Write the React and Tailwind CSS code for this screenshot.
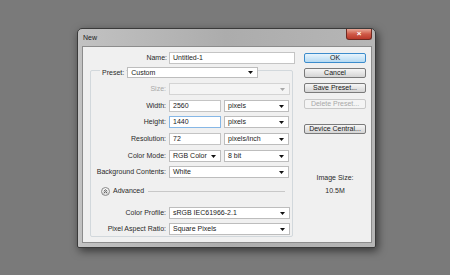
import React from "react";

const font = { fontFamily: '"Liberation Sans", Arial, sans-serif' };

function Arrow({ disabled }) {
  return (
    <svg width="5" height="3" viewBox="0 0 5 3" className="shrink-0">
      <path d="M0 0H5L2.5 3Z" fill={disabled ? "#a8a8a8" : "#111"} />
    </svg>
  );
}

function Combo({ w, value, disabled }) {
  return (
    <div
      className={`flex h-[12px] items-center justify-between border pl-[3px] pr-[4px] ${
        disabled ? "border-[#d4d4d4] bg-[#f4f4f4]" : "border-[#bdbdbd] bg-white"
      }`}
      style={{ width: w }}
    >
      <span className="leading-[10px] text-[#222]">{value}</span>
      <Arrow disabled={disabled} />
    </div>
  );
}

function Field({ w, value, focus }) {
  return (
    <div
      className={`flex h-[12px] items-center border pl-[3px] ${
        focus ? "border-[#86b7e6]" : "border-[#c4c4c4]"
      } bg-white`}
      style={{ width: w }}
    >
      <span className="leading-[10px] text-[#222]">{value}</span>
    </div>
  );
}

function Row({ label, children, className = "", disabled }) {
  return (
    <div className={`flex h-[12px] items-center gap-[3px] ${className}`}>
      <div
        className={`w-[75px] text-right leading-[10px] ${
          disabled ? "text-[#a8a8a8]" : "text-[#2a2a2a]"
        }`}
      >
        {label}
      </div>
      <div className="flex items-center gap-[3px]">{children}</div>
    </div>
  );
}

function Btn({ children, className = "", primary, disabled }) {
  return (
    <div
      className={`flex h-[10px] w-[62px] items-center justify-center rounded-[2px] border leading-[8px] ${
        primary
          ? "border-[#3c8ccc] bg-gradient-to-b from-[#e8f4fc] to-[#b6daf2] text-[#1a1a1a]"
          : disabled
          ? "border-[#c8c8c8] bg-[#f4f4f4] text-[#a8a8a8]"
          : "border-[#7a7a7a] bg-gradient-to-b from-[#f6f6f6] to-[#d4d4d4] text-[#1a1a1a]"
      } ${className}`}
    >
      {children}
    </div>
  );
}

export default function App() {
  return (
    <div
      className="h-[275px] w-[450px] overflow-hidden bg-[#7a7a7a] pl-[77px] pt-[28px] text-[7px]"
      style={font}
    >
      <div className="flex h-[220px] w-[299px] flex-col rounded-t-[5px] rounded-b-[2px] border border-[#3a3a3a] bg-gradient-to-r from-[#c2c2c2] via-[#acacac] to-[#b6b6b6] shadow-[2px_3px_8px_rgba(0,0,0,0.55)]">
        {/* title bar */}
        <div className="flex h-[17px] items-start justify-between pl-[5px] pr-[3px]">
          <span className="pt-[5px] leading-[8px] text-[#1c1c1c]">New</span>
          <div className="flex h-[11px] w-[26px] items-center justify-center rounded-b-[3px] border border-t-0 border-[#6e2a22] bg-gradient-to-b from-[#e6a898] via-[#cf5a48] to-[#b9382a]">
            <span className="text-[8px] font-bold leading-[8px] text-white">×</span>
          </div>
        </div>
        {/* client */}
        <div className="ml-[4px] flex h-[197px] w-[290px] border border-[#8c8c8c] bg-[#f0f0f0]">
          {/* left column */}
          <div className="flex w-[212px] flex-col">
            <div className="mt-[5px] flex h-[12px] items-center gap-[2px]">
              <div className="w-[84px] text-right leading-[10px] text-[#2a2a2a]">Name:</div>
              <Field w={126} value="Untitled-1" />
            </div>
            <div className="ml-[7px] mt-[6px] flex h-[167px] w-[203px] flex-col rounded-[2px] border border-[#d2d8dc]">
              <div className="-mt-[4px] flex h-[11px] items-center">
                <span className="ml-[9px] bg-[#f0f0f0] px-[2px] leading-[10px] text-[#2a2a2a]">Preset:</span>
                <div className="ml-[1px] bg-[#f0f0f0]">
                  <div className="flex h-[11px] w-[131px] items-center justify-between border border-[#bdbdbd] bg-white pl-[3px] pr-[4px]">
                    <span className="leading-[10px] text-[#222]">Custom</span>
                    <Arrow />
                  </div>
                </div>
              </div>
              <Row label="Size:" className="mt-[5px]" disabled>
                <Combo w={121} value="" disabled />
              </Row>
              <Row label="Width:" className="mt-[5px]">
                <Field w={52} value="2560" />
                <Combo w={65} value="pixels" />
              </Row>
              <Row label="Height:" className="mt-[4px]">
                <Field w={52} value="1440" focus />
                <Combo w={65} value="pixels" />
              </Row>
              <Row label="Resolution:" className="mt-[5px]">
                <Field w={52} value="72" />
                <Combo w={65} value="pixels/inch" />
              </Row>
              <Row label="Color Mode:" className="mt-[5px]">
                <Combo w={52} value="RGB Color" />
                <Combo w={65} value="8 bit" />
              </Row>
              <Row label="Background Contents:" className="mt-[4px]">
                <Combo w={120} value="White" />
              </Row>
              <div className="mt-[8px] flex h-[10px] items-center">
                <div className="ml-[10px] flex h-[9px] w-[9px] items-center justify-center rounded-full border border-[#8a8a8a] bg-gradient-to-b from-[#fbfbfb] to-[#dcdcdc]">
                  <svg width="5" height="5" viewBox="0 0 5 5">
                    <path d="M0.8 2.3L2.5 0.8L4.2 2.3M0.8 4.2L2.5 2.7L4.2 4.2" stroke="#333" strokeWidth="0.8" fill="none" />
                  </svg>
                </div>
                <span className="ml-[3px] leading-[10px] text-[#2a2a2a]">Advanced</span>
                <div className="ml-[4px] mr-[7px] h-px flex-1 bg-[#c8c8c8]" />
              </div>
              <Row label="Color Profile:" className="mt-[11px]">
                <Combo w={121} value="sRGB IEC61966-2.1" />
              </Row>
              <Row label="Pixel Aspect Ratio:" className="mt-[4px]">
                <Combo w={121} value="Square Pixels" />
              </Row>
            </div>
          </div>
          {/* right column */}
          <div className="ml-[9px] flex w-[62px] flex-col items-center">
            <Btn primary className="mt-[6px]">OK</Btn>
            <Btn className="mt-[5px]">Cancel</Btn>
            <Btn className="mt-[5px]">Save Preset...</Btn>
            <Btn disabled className="mt-[6px]">Delete Preset...</Btn>
            <Btn className="mt-[15px]">Device Central...</Btn>
            <div className="mt-[39px] h-[9px] leading-[9px] text-[#2a2a2a]">Image Size:</div>
            <div className="mt-[4px] h-[9px] leading-[9px] text-[#2a2a2a]">10.5M</div>
          </div>
        </div>
      </div>
    </div>
  );
}
